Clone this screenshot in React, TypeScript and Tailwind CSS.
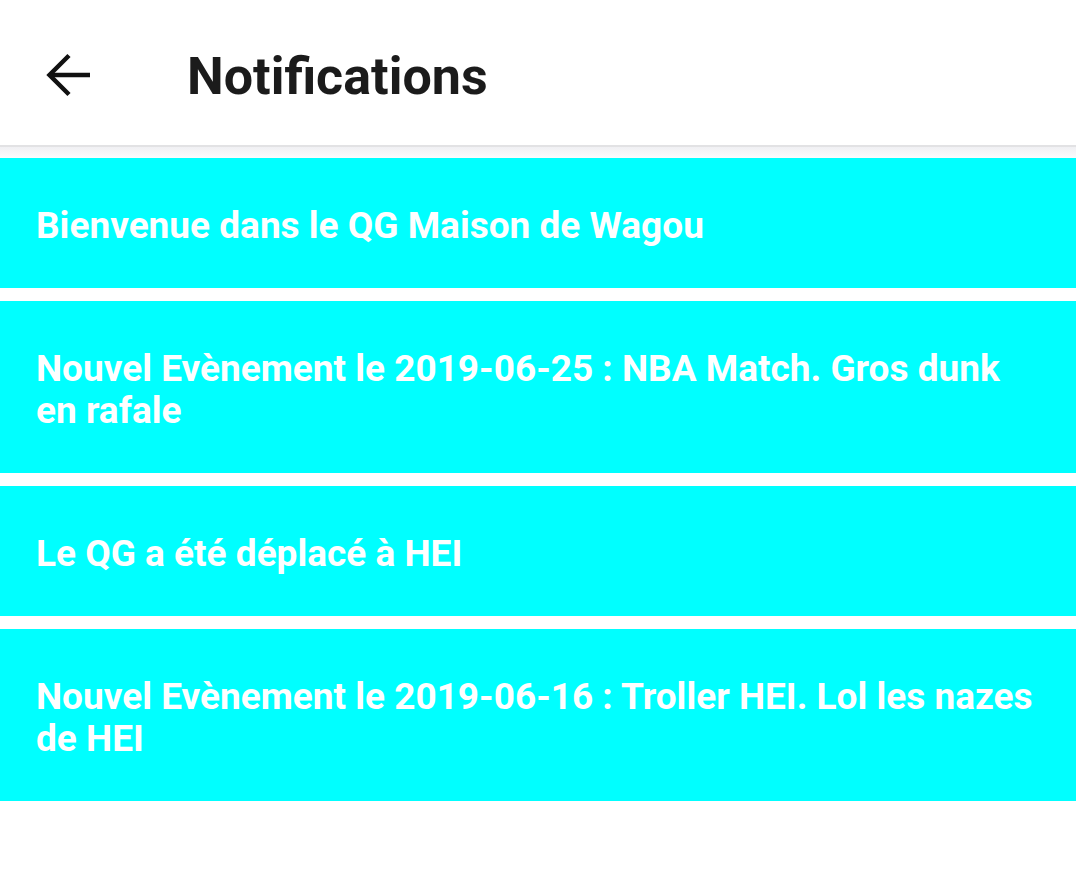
import React from 'react'

const notifications = [
  'Bienvenue dans le QG Maison de Wagou',
  'Nouvel Evènement le 2019-06-25 : NBA Match. Gros dunk en rafale',
  'Le QG a été déplacé à HEI',
  'Nouvel Evènement le 2019-06-16 : Troller HEI. Lol les nazes de HEI',
]

export default function App() {
  return (
    <div className="min-h-[895px] w-[1076px] bg-white" style={{ fontFamily: 'Roboto, "Liberation Sans", sans-serif' }}>
      <header className="flex h-[147px] items-center border-b-2 border-[#e2e2e4] bg-white pt-[5px]">
        <button className="ml-[44px] flex h-[48px] w-[48px] items-center justify-center" aria-label="back">
          <svg viewBox="0 0 48 48" width="48" height="48" fill="none" stroke="#111" strokeWidth="4.5">
            <path d="M46 24H8" />
            <path d="M25 4.5 5.5 24 25 43.5" strokeLinejoin="miter" />
          </svg>
        </button>
        <h1 className="ml-[95px] mt-[3px] text-[52px] font-bold leading-none text-[#1b1b1b]">Notifications</h1>
      </header>
      <div className="h-[11px] bg-gradient-to-b from-[#f0f0f3] to-[#fbfbfd]" />
      <ul className="flex flex-col gap-[13px]">
        {notifications.map((n) => (
          <li
            key={n}
            className="bg-[#00ffff] pb-[41px] pl-[36px] pr-[30px] pt-[47px] text-[37px] font-bold leading-[42px] text-white"
          >
            {n}
          </li>
        ))}
      </ul>
    </div>
  )
}
